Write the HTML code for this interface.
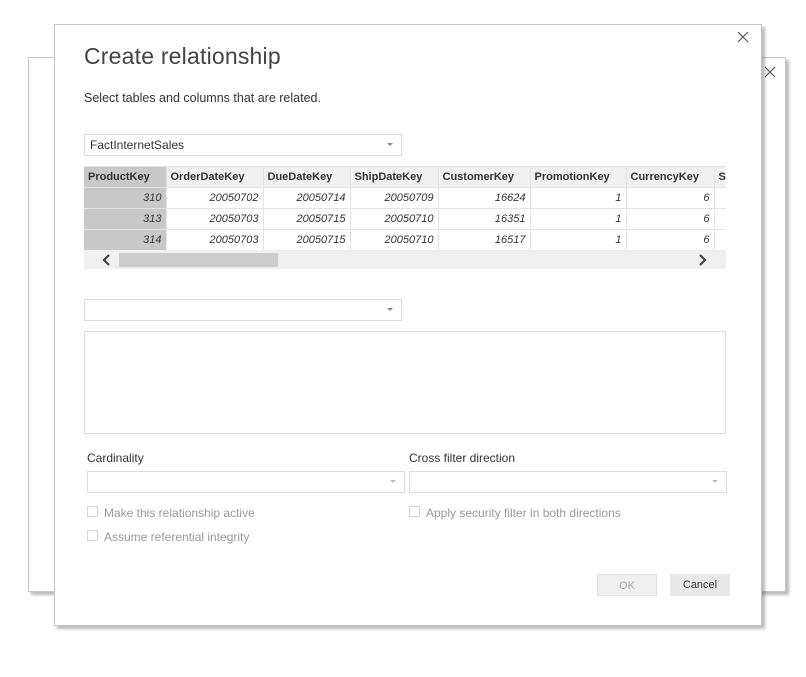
<!DOCTYPE html>
<html><head><meta charset="utf-8"><style>
*{box-sizing:border-box;margin:0;padding:0}
body{width:806px;height:677px;background:#fff;position:relative;overflow:hidden;font-family:"Segoe UI","Liberation Sans",sans-serif;color:#333}
.abs{position:absolute}
.dlg{position:absolute;background:#fff;border:1px solid #c6c6c6;box-shadow:3px 3px 3px rgba(0,0,0,0.28)}
.dd{position:absolute;border:1px solid #dcdcdc;background:#fff;font-size:12px;color:#333;padding-left:5px;line-height:20px}
.arr{position:absolute;right:8px;top:8px;width:0;height:0;border-left:3px solid transparent;border-right:3px solid transparent;border-top:3px solid #888}
table{border-collapse:collapse;font-size:11px;table-layout:fixed}
td,th{height:21px;border-right:1px solid #e3e3e3;border-bottom:1px solid #e3e3e3;padding:0 4px;white-space:nowrap;overflow:hidden}
th{background:#f0f0f0;text-align:left;font-weight:bold;color:#333;height:20px}
td{text-align:right;font-style:italic;color:#333}
.pk{background:#c8c8c8}
.lbl{position:absolute;font-size:12px;color:#333}
.cb{position:absolute;width:11px;height:11px;border:1px solid #d6d6d6;background:#fff}
.cbl{position:absolute;font-size:12px;color:#999}
.btn{position:absolute;font-size:11px;text-align:center;line-height:22px;height:22px}
</style></head><body>
<div class="dlg" style="left:28px;top:57px;width:758px;height:535px"></div>
<svg class="abs" style="left:764px;top:66px" width="12" height="12"><path d="M1 1 L11 11 M11 1 L1 11" stroke="#555" stroke-width="1.2"/></svg>
<div class="dlg" style="left:54px;top:24px;width:708px;height:602px"></div>
<svg class="abs" style="left:737px;top:31px" width="12" height="12"><path d="M1 1 L11 11 M11 1 L1 11" stroke="#555" stroke-width="1.2"/></svg>
<div class="abs" style="left:84px;top:43px;font-size:23px;color:#444;letter-spacing:0.2px">Create relationship</div>
<div class="abs" style="left:84px;top:91px;font-size:12.5px;color:#333">Select tables and columns that are related.</div>
<div class="dd" style="left:84px;top:134px;width:318px;height:22px">FactInternetSales<div class="arr"></div></div>
<div class="abs" style="left:84px;top:166px;width:642px;height:103px;overflow:hidden;border-top:1px solid #e3e3e3">
<table style="width:700px">
<colgroup><col style="width:82px"><col style="width:97px"><col style="width:87px"><col style="width:88px"><col style="width:92px"><col style="width:96px"><col style="width:88px"><col style="width:70px"></colgroup>
<tr><th class="pk">ProductKey</th><th>OrderDateKey</th><th>DueDateKey</th><th>ShipDateKey</th><th>CustomerKey</th><th>PromotionKey</th><th>CurrencyKey</th><th>S</th></tr>
<tr><td class="pk">310</td><td>20050702</td><td>20050714</td><td>20050709</td><td>16624</td><td>1</td><td>6</td><td></td></tr>
<tr><td class="pk">313</td><td>20050703</td><td>20050715</td><td>20050710</td><td>16351</td><td>1</td><td>6</td><td></td></tr>
<tr><td class="pk">314</td><td>20050703</td><td>20050715</td><td>20050710</td><td>16517</td><td>1</td><td>6</td><td></td></tr>
</table>
<div class="abs" style="left:0;top:83px;width:642px;height:20px;background:#f0f0f0">
<div class="abs" style="left:35px;top:3px;width:159px;height:14px;background:#cdcdcd"></div>
<svg class="abs" style="left:17px;top:4px" width="10" height="12"><path d="M8 1 L3 6 L8 11" stroke="#444" stroke-width="2.2" fill="none"/></svg>
<svg class="abs" style="left:614px;top:4px" width="10" height="12"><path d="M2 1 L7 6 L2 11" stroke="#444" stroke-width="2.2" fill="none"/></svg>
</div>
</div>
<div class="dd" style="left:84px;top:299px;width:318px;height:22px"><div class="arr"></div></div>
<div class="abs" style="left:84px;top:331px;width:642px;height:103px;border:1px solid #dcdcdc"></div>
<div class="lbl" style="left:87px;top:451px">Cardinality</div>
<div class="lbl" style="left:409px;top:451px">Cross filter direction</div>
<div class="dd" style="left:87px;top:471px;width:318px;height:22px"><div class="arr" style="border-top-color:#bbb"></div></div>
<div class="dd" style="left:409px;top:471px;width:318px;height:22px"><div class="arr" style="border-top-color:#bbb"></div></div>
<div class="cb" style="left:87px;top:506px"></div><div class="cbl" style="left:104px;top:506px">Make this relationship active</div>
<div class="cb" style="left:409px;top:506px"></div><div class="cbl" style="left:426px;top:506px">Apply security filter in both directions</div>
<div class="cb" style="left:87px;top:530px"></div><div class="cbl" style="left:104px;top:530px">Assume referential integrity</div>
<div class="btn" style="left:597px;top:574px;width:60px;background:#efefef;border:1px solid #e0e0e0;color:#aaa">OK</div>
<div class="btn" style="left:670px;top:574px;width:60px;background:#e8e8e8;color:#333">Cancel</div>
</body></html>
